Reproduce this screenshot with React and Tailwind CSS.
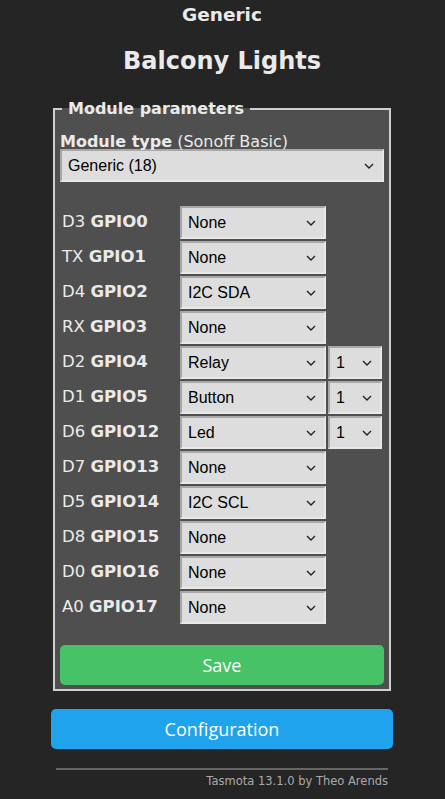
import React from "react";

const rows = [
  { pin: "D3", gpio: "GPIO0", value: "None" },
  { pin: "TX", gpio: "GPIO1", value: "None" },
  { pin: "D4", gpio: "GPIO2", value: "I2C SDA" },
  { pin: "RX", gpio: "GPIO3", value: "None" },
  { pin: "D2", gpio: "GPIO4", value: "Relay", index: "1" },
  { pin: "D1", gpio: "GPIO5", value: "Button", index: "1" },
  { pin: "D6", gpio: "GPIO12", value: "Led", index: "1" },
  { pin: "D7", gpio: "GPIO13", value: "None" },
  { pin: "D5", gpio: "GPIO14", value: "I2C SCL" },
  { pin: "D8", gpio: "GPIO15", value: "None" },
  { pin: "D0", gpio: "GPIO16", value: "None" },
  { pin: "A0", gpio: "GPIO17", value: "None" },
];

// fake select box, arrow drawn by hand so it looks the same everywhere
const Select = ({ value, className = "" }) => (
  <div
    className={`flex items-center justify-between h-[33px] pl-[6px] pr-[8px] bg-[#dddddd] text-black border-2 border-t-[#a8a8a8] border-l-[#a8a8a8] border-b-[#e8e8e8] border-r-[#e8e8e8] font-['Liberation_Sans',sans-serif] text-[16px] ${className}`}
  >
    <span>{value}</span>
    <svg width="10" height="6" viewBox="0 0 10 6" fill="none">
      <path d="M1 1l4 4 4-4" stroke="#222" strokeWidth="1.4" />
    </svg>
  </div>
);

export default function App() {
  return (
    <div className="min-h-[799px] bg-[#252525] text-[#eaeaea] font-['DejaVu_Sans',sans-serif]">
      <div className="w-[342px] ml-[51px] pt-[4px]">
        <h3 className="text-center font-bold text-[18.5px] leading-[22px]">Generic</h3>
        <h2 className="text-center font-bold text-[24px] leading-[30px] mt-[20px]">Balcony Lights</h2>

        <fieldset className="mt-[24px] mx-[2px] border-2 border-[#d0d0d0] bg-[#4f4f4f] px-[5px] pb-[4px]">
          <legend className="ml-[2px] px-[6px] font-bold text-[16px] leading-[18px]">
            Module parameters
          </legend>

          <div className="mt-[16px] text-[16px] leading-[15px]">
            <b>Module type</b> (Sonoff Basic)
          </div>
          <Select value="Generic (18)" className="w-full" />

          <div className="mt-[24px] flex flex-col gap-[2px]">
            {rows.map((r) => (
              <div key={r.gpio} className="flex items-center">
                <div className="w-[120px] pl-[2px] text-[16.5px]">
                  {r.pin} <b>{r.gpio}</b>
                </div>
                <Select value={r.value} className="w-[146px]" />
                {r.index && <Select value={r.index} className="w-[54px] ml-[2px]" />}
              </div>
            ))}
          </div>

          <button className="mt-[21px] w-full h-[40px] rounded-[5px] bg-[#47c266] text-white text-[18px] font-['Open_Sans',sans-serif]">
            Save
          </button>
        </fieldset>

        <button className="mt-[18px] w-full h-[40px] rounded-[5px] bg-[#1fa3ec] text-white text-[18px] font-['Open_Sans',sans-serif]">
          Configuration
        </button>

        <div className="mt-[19px] mx-[5px] border-t-2 border-[#666]" />
        <div className="mx-[5px] mt-[3px] text-right text-[11.5px] text-[#aaa]">
          Tasmota 13.1.0 by Theo Arends
        </div>
      </div>
    </div>
  );
}
